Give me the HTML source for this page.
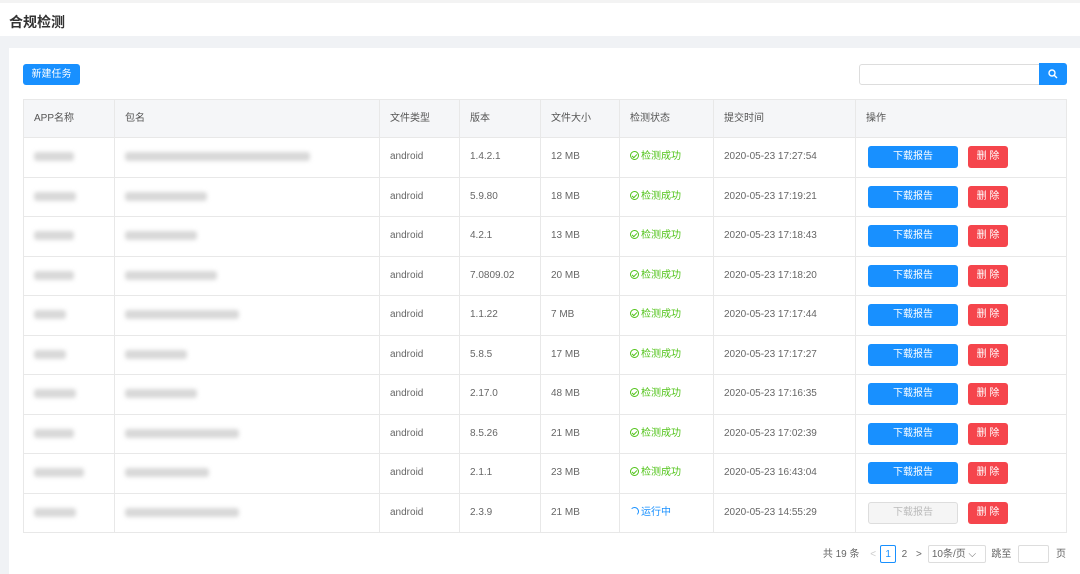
<!DOCTYPE html>
<html><head><meta charset="utf-8"><style>
*{box-sizing:border-box;margin:0;padding:0}
body{width:1080px;height:574px;overflow:hidden;background:#f0f2f5;font-family:"Liberation Sans","Noto Sans CJK SC",sans-serif;font-size:10px;color:#666;position:relative}
.top{position:absolute;left:0;top:0;width:1080px;height:36px;background:#fff;border-top:3px solid #f3f3f3}
.top h1{position:absolute;left:9px;top:9px;font-size:14px;color:#333;font-weight:bold}
.card{position:absolute;left:9px;top:48px;width:1071px;height:526px;background:#fff}
.btn{position:absolute;background:#1890ff;color:#fff;border-radius:3px;text-align:center}
table{position:absolute;left:23px;top:99px;width:1044px;border-collapse:collapse;table-layout:fixed}
td,th{border:1px solid #e8e8e8;height:39.5px;padding:0 0 0 10px;text-align:left;font-weight:normal;color:#666;vertical-align:middle;line-height:14px;white-space:nowrap}
th{background:#f5f6f8;height:38px;color:#555}
tr td{border-left:none;border-right:none}
tr td:first-child{border-left:1px solid #e8e8e8}
tr td:last-child{border-right:1px solid #e8e8e8}
td.v{border-left:1px solid #e8e8e8}
.ok{color:#52c41a}.run{color:#1890ff}
.ic{display:inline-block;width:9px;height:9px;border:1px solid currentColor;border-radius:50%;vertical-align:-1px;margin-right:2px;position:relative}
.ok .ic::after{content:"";position:absolute;left:2px;top:1px;width:2px;height:4px;border:solid currentColor;border-width:0 1px 1px 0;transform:rotate(45deg)}
.run .ic{border-left-color:transparent;border-bottom-color:transparent}
.dl{display:inline-block;width:90px;height:22px;line-height:22px;background:#1890ff;color:#fff;border-radius:3px;text-align:center;margin-left:2px;vertical-align:middle}
.dl.dis{background:#f5f5f5;color:#bbb;border:1px solid #ddd;line-height:20px}
.del{display:inline-block;width:40px;height:22px;line-height:22px;background:#f5454c;color:#fff;border-radius:3px;text-align:center;margin-left:10px;vertical-align:middle}
.b{display:inline-block;height:9px;background:#d8d8d8;border-radius:3px;filter:blur(2px);vertical-align:middle}
</style></head><body>
<div class="top"><h1>合规检测</h1></div>
<div class="card"></div>
<div class="btn" style="left:23px;top:64px;width:57px;height:21px;line-height:21px;font-size:10px">新建任务</div>
<div style="position:absolute;left:859px;top:64px;width:181px;height:21px;border:1px solid #ddd;border-radius:3px 0 0 3px;background:#fff"></div>
<div class="btn" style="left:1039px;top:63px;width:28px;height:22px;border-radius:0 3px 3px 0"><svg width="10" height="10" viewBox="0 0 10 10" style="margin-top:6px"><circle cx="4" cy="4" r="3" fill="none" stroke="#fff" stroke-width="1.4"/><path d="M6.2 6.2L9 9" stroke="#fff" stroke-width="1.4"/></svg></div>
<table>
<tr><th style="width:91px">APP名称</th><th style="width:265px">包名</th><th style="width:80px">文件类型</th><th style="width:81px">版本</th><th style="width:79px">文件大小</th><th style="width:94px">检测状态</th><th style="width:142px">提交时间</th><th>操作</th></tr>
<tr><td><span class="b" style="width:40px"></span></td><td class="v"><span class="b" style="width:185px"></span></td><td class="v">android</td><td class="v">1.4.2.1</td><td class="v">12 MB</td><td class="v ok"><i class="ic"></i>检测成功</td><td class="v">2020-05-23 17:27:54</td><td class="v"><span class="dl">下载报告</span><span class="del">删 除</span></td></tr>
<tr><td><span class="b" style="width:42px"></span></td><td class="v"><span class="b" style="width:82px"></span></td><td class="v">android</td><td class="v">5.9.80</td><td class="v">18 MB</td><td class="v ok"><i class="ic"></i>检测成功</td><td class="v">2020-05-23 17:19:21</td><td class="v"><span class="dl">下载报告</span><span class="del">删 除</span></td></tr>
<tr><td><span class="b" style="width:40px"></span></td><td class="v"><span class="b" style="width:72px"></span></td><td class="v">android</td><td class="v">4.2.1</td><td class="v">13 MB</td><td class="v ok"><i class="ic"></i>检测成功</td><td class="v">2020-05-23 17:18:43</td><td class="v"><span class="dl">下载报告</span><span class="del">删 除</span></td></tr>
<tr><td><span class="b" style="width:40px"></span></td><td class="v"><span class="b" style="width:92px"></span></td><td class="v">android</td><td class="v">7.0809.02</td><td class="v">20 MB</td><td class="v ok"><i class="ic"></i>检测成功</td><td class="v">2020-05-23 17:18:20</td><td class="v"><span class="dl">下载报告</span><span class="del">删 除</span></td></tr>
<tr><td><span class="b" style="width:32px"></span></td><td class="v"><span class="b" style="width:114px"></span></td><td class="v">android</td><td class="v">1.1.22</td><td class="v">7 MB</td><td class="v ok"><i class="ic"></i>检测成功</td><td class="v">2020-05-23 17:17:44</td><td class="v"><span class="dl">下载报告</span><span class="del">删 除</span></td></tr>
<tr><td><span class="b" style="width:32px"></span></td><td class="v"><span class="b" style="width:62px"></span></td><td class="v">android</td><td class="v">5.8.5</td><td class="v">17 MB</td><td class="v ok"><i class="ic"></i>检测成功</td><td class="v">2020-05-23 17:17:27</td><td class="v"><span class="dl">下载报告</span><span class="del">删 除</span></td></tr>
<tr><td><span class="b" style="width:42px"></span></td><td class="v"><span class="b" style="width:72px"></span></td><td class="v">android</td><td class="v">2.17.0</td><td class="v">48 MB</td><td class="v ok"><i class="ic"></i>检测成功</td><td class="v">2020-05-23 17:16:35</td><td class="v"><span class="dl">下载报告</span><span class="del">删 除</span></td></tr>
<tr><td><span class="b" style="width:40px"></span></td><td class="v"><span class="b" style="width:114px"></span></td><td class="v">android</td><td class="v">8.5.26</td><td class="v">21 MB</td><td class="v ok"><i class="ic"></i>检测成功</td><td class="v">2020-05-23 17:02:39</td><td class="v"><span class="dl">下载报告</span><span class="del">删 除</span></td></tr>
<tr><td><span class="b" style="width:50px"></span></td><td class="v"><span class="b" style="width:84px"></span></td><td class="v">android</td><td class="v">2.1.1</td><td class="v">23 MB</td><td class="v ok"><i class="ic"></i>检测成功</td><td class="v">2020-05-23 16:43:04</td><td class="v"><span class="dl">下载报告</span><span class="del">删 除</span></td></tr>
<tr><td><span class="b" style="width:42px"></span></td><td class="v"><span class="b" style="width:114px"></span></td><td class="v">android</td><td class="v">2.3.9</td><td class="v">21 MB</td><td class="v run"><i class="ic"></i>运行中</td><td class="v">2020-05-23 14:55:29</td><td class="v"><span class="dl dis">下载报告</span><span class="del">删 除</span></td></tr>
</table>
<div style="position:absolute;right:14px;top:545px;height:18px;line-height:18px;white-space:nowrap;color:#666">共 19 条 <span style="color:#ccc;margin:0 4px 0 8px">&lt;</span><span style="display:inline-block;width:16px;height:18px;border:1px solid #1890ff;color:#1890ff;text-align:center;border-radius:2px">1</span> &nbsp;2 <span style="margin:0 6px">&gt;</span><span style="display:inline-block;width:58px;height:18px;border:1px solid #ddd;border-radius:2px;padding-left:3px">10条/页 ⌵</span> &nbsp;跳至 <span style="display:inline-block;width:31px;height:18px;border:1px solid #ddd;border-radius:2px;vertical-align:top;margin:0 4px"></span> 页</div>
</body></html>
